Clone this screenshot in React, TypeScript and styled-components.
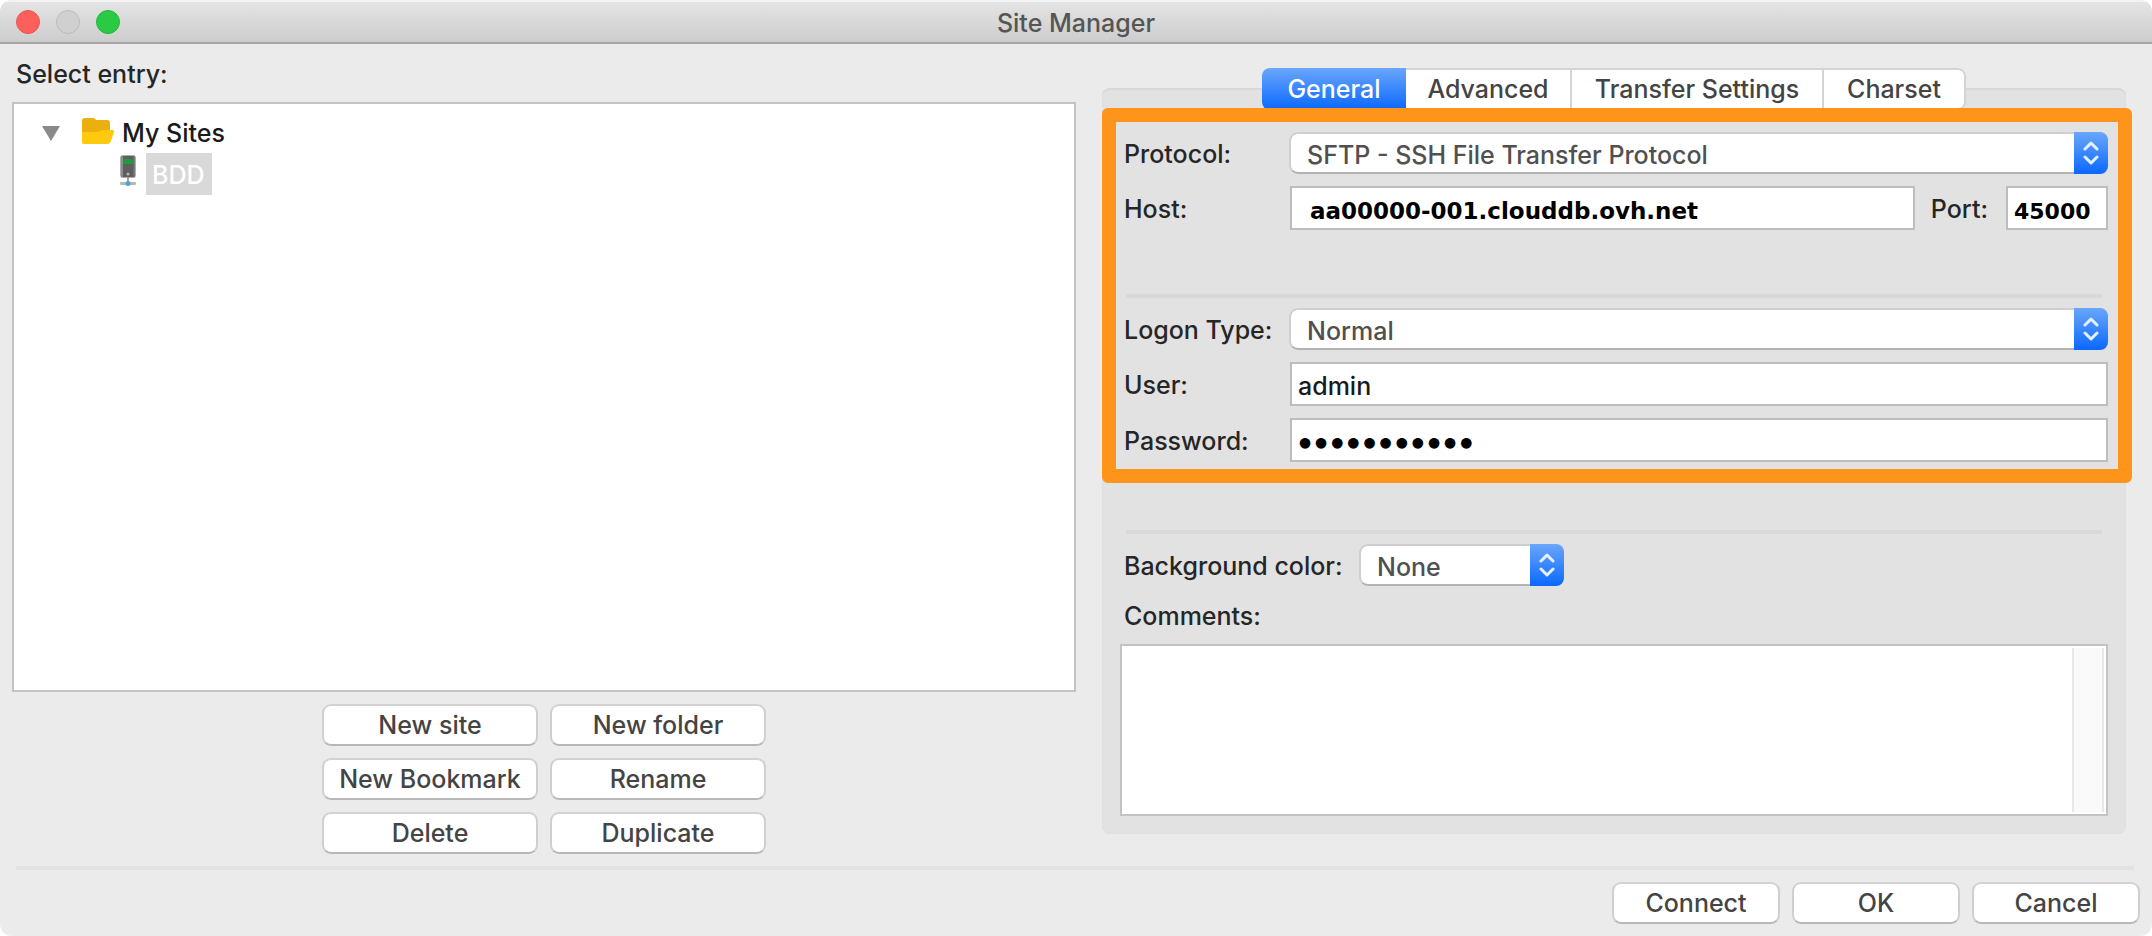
import React from "react";
import styled, { createGlobalStyle, css } from "styled-components";

const GlobalStyle = createGlobalStyle`
  * { box-sizing: border-box; }
  body {
    margin: 0;
    background: #fff;
    color: #262626;
    font-family: Inter, "Liberation Sans", sans-serif;
    font-size: 25px;
    font-weight: 500;
    line-height: 32px;
  }
  button, input, select, textarea { font: inherit; color: inherit; margin: 0; }
`;

const Window = styled.main`
  display: flex;
  flex-direction: column;
  min-height: 100vh;
  background: #ebebeb;
  border-radius: 12px;
  overflow: hidden;
`;

const TitleBar = styled.header`
  display: grid;
  grid-template-columns: 1fr auto 1fr;
  align-items: center;
  height: 44px;
  padding: 2px 16px 0;
  border-bottom: 2px solid #a6a6a6;
  background: linear-gradient(#e5e5e5, #cdcdcd);
  box-shadow: inset 0 2px 0 #f3f3f3;
`;

const Title = styled.h1`
  margin: 0;
  padding-top: 2px;
  font-size: 25px;
  font-weight: 500;
  color: #555;
`;

const Lights = styled.div`
  display: flex;
  gap: 16px;
`;

const Light = styled.button<{ $fill: string; $edge: string }>`
  width: 24px;
  height: 24px;
  padding: 0;
  border: 1px solid ${(p) => p.$edge};
  border-radius: 50%;
  background: ${(p) => p.$fill};
`;

const Content = styled.div`
  flex: 1;
  display: grid;
  grid-template-columns: 1064fr 1024fr;
  gap: 26px;
  padding: 14px 26px 12px 12px;
`;

const LeftPane = styled.section`
  display: flex;
  flex-direction: column;
`;

const PaneLabel = styled.h2`
  margin: 0;
  padding: 0 0 12px 4px;
  font-size: 25px;
  font-weight: 500;
`;

const Tree = styled.ul`
  flex: 1;
  margin: 0 0 12px;
  padding: 10px 28px;
  border: 2px solid #c3c3c3;
  background: #fff;
  list-style: none;
  color: #1a1a1a;
`;

const TreeChildren = styled.ul`
  margin: 0;
  padding: 0 0 0 78px;
  list-style: none;
`;

const TreeRow = styled.div`
  display: flex;
  align-items: center;
  height: 40px;
`;

const Disclosure = styled.button`
  display: flex;
  width: 40px;
  padding: 0;
  border: 0;
  background: none;
`;

const TreeName = styled.span<{ $selected?: boolean }>`
  padding: 4px 6px 6px;
  ${(p) =>
    p.$selected &&
    css`
      padding: 6px 7px 4px 6px;
      background: #d9d9d9;
      color: #fff;
    `}
`;

const IconSlot = styled.span<{ $width: number }>`
  display: flex;
  width: ${(p) => p.$width}px;
  padding-bottom: 6px;
`;

const PushButton = styled.button`
  height: 42px;
  padding: 0;
  border: 2px solid;
  border-color: #d2d2d2 #cfcfcf #b8b8b8;
  border-radius: 9px;
  background: #fff;
  color: #444;
`;

const EntryActions = styled.div`
  display: grid;
  grid-template-columns: 216px 216px;
  gap: 12px;
  justify-content: center;
`;

const RightPane = styled.section`
  display: flex;
  flex-direction: column;
  margin: 30px 0 20px;
  padding-bottom: 18px;
  border-radius: 8px;
  background: #e2e2e2;
  box-shadow: inset 0 2px 0 #d9d9d9, inset 0 0 0 1px #dfdfdf;
`;

const Tabs = styled.div`
  align-self: center;
  display: flex;
  height: 42px;
  margin-top: -20px;
  border-radius: 8px;
  overflow: hidden;
`;

const Tab = styled.button<{ $width: number; $active?: boolean }>`
  width: ${(p) => p.$width}px;
  padding: 0;
  border: solid #d4d4d4;
  border-width: 2px 2px 2px 0;
  background: #fff;
  color: #444;
  &:last-child { border-radius: 0 8px 8px 0; }
  ${(p) =>
    p.$active &&
    css`
      border: 0;
      background: linear-gradient(#6aa6fb, #0a68ff);
      color: #fff;
    `}
`;

const Highlight = styled.div`
  position: relative;
  display: flex;
  flex-direction: column;
  gap: 12px;
  margin: -2px -6px 0 0;
  padding: 10px 10px 7px 8px;
  border: 14px solid #ff941a;
  border-radius: 6px;
`;

const Field = styled.div`
  display: grid;
  grid-template-columns: 166px 1fr;
  align-items: center;
`;

const HostField = styled(Field)`
  grid-template-columns: 166px 1fr auto 102px;
`;

const Label = styled.label`
  padding-top: 2px;
`;

const PortLabel = styled(Label)`
  padding-left: 16px;
  padding-right: 18px;
`;

const TextInput = styled.input<{ $typed?: number; $inset?: number; $masked?: boolean }>`
  width: 100%;
  min-width: 0;
  height: 44px;
  padding: 4px 6px 0 ${(p) => p.$inset ?? 6}px;
  border: 2px solid #bdbdbd;
  border-radius: 0;
  background: #fff;
  color: #1a1a1a;
  ${(p) =>
    p.$typed &&
    css`
      padding-top: 6px;
      color: #000;
      font-family: "DejaVu Sans", sans-serif;
      font-size: ${p.$typed}px;
      font-weight: 700;
    `}
  ${(p) =>
    p.$masked &&
    css`
      padding: 0 5px;
      color: #000;
      font-size: 34px;
      font-weight: 700;
    `}
`;

const Rule = styled.hr<{ $color?: string }>`
  height: 4px;
  margin: 0;
  border: 0;
  background: ${(p) => p.$color ?? "#d9d9d9"};
`;

const LogonRule = styled(Rule)`
  margin: 52px 6px -2px 2px;
`;

const Picker = styled.div`
  display: grid;
  grid-template-columns: 1fr 34px;
  height: 42px;
  margin-left: -1px;
`;

const PickerSelect = styled.select`
  grid-area: 1 / 1 / 2 / 3;
  appearance: none;
  width: 100%;
  padding: 4px 48px 0 16px;
  border: 2px solid;
  border-color: #cfcfcf #cfcfcf #b4b4b4;
  border-radius: 9px;
  background: #fff;
  color: #505050;
`;

const Stepper = styled.span`
  grid-area: 1 / 2;
  display: flex;
  align-items: center;
  justify-content: center;
  z-index: 1;
  border-radius: 0 8px 8px 0;
  background: linear-gradient(#6aa6fb, #0a68ff);
  pointer-events: none;
`;

const Extras = styled.div`
  flex: 1;
  display: flex;
  flex-direction: column;
  padding: 47px 18px 0;
`;

const ExtrasRule = styled(Rule)`
  margin: 0 6px 10px;
`;

const ColorField = styled.div`
  display: grid;
  grid-template-columns: 236px 204px;
  align-items: center;
  padding-left: 4px;
  margin-bottom: 14px;
`;

const CommentsLabel = styled(Label)`
  padding: 0 0 12px 4px;
`;

const CommentsBox = styled.div`
  flex: 1;
  display: flex;
  min-height: 172px;
  padding: 2px;
  border: 2px solid #c3c3c3;
  background: #fff;
`;

const CommentsInput = styled.textarea`
  flex: 1;
  border: 0;
  padding: 4px;
  resize: none;
  background: none;
`;

const ScrollTrack = styled.div`
  width: 32px;
  border: solid #e8e8e8;
  border-width: 0 2px;
  background: #fafafa;
`;

const Footer = styled.footer`
  padding: 0 12px 12px;
`;

const FooterRule = styled(Rule)`
  margin: 0 6px 12px 4px;
`;

const FooterActions = styled.div`
  display: grid;
  grid-template-columns: repeat(3, 168px);
  gap: 12px;
  justify-content: end;
`;

const TriangleIcon = () => (
  <svg width="18" height="16" viewBox="0 0 18 16" aria-hidden="true">
    <path d="M0 0H18L9 15Z" fill="#8a8a8a" />
  </svg>
);

const FolderIcon = () => (
  <svg width="32" height="26" viewBox="0 0 32 26" aria-hidden="true">
    <path d="M0 3Q0 0 3 0H11Q13 0 14 2H25Q28 2 28 5V20H0Z" fill="#eab010" />
    <path
      d="M0 25V14H15Q17 14 18 13Q19 12 21 12H31Q32 12 32 14L29 23Q28 26 26 26H2Q0 26 0 25Z"
      fill="#ffc90e"
    />
  </svg>
);

const ServerIcon = () => (
  <svg width="16" height="32" viewBox="0 0 16 32" aria-hidden="true">
    <rect x="0.5" y="0.5" width="15" height="22" rx="1.5" fill="#5e5e5e" />
    <rect x="1" y="1" width="2" height="21" fill="#8c8c8c" />
    <rect x="13.5" y="1" width="1.5" height="21" fill="#7c7c7c" />
    <rect x="3" y="4" width="10" height="5" rx="1" fill="#1f9a3c" />
    <circle cx="8" cy="19" r="1.5" fill="#b5b5b5" />
    <rect x="7" y="22" width="2" height="6" fill="#a0a0a0" />
    <rect x="0" y="27" width="16" height="3" rx="1" fill="#b4b9bc" />
    <circle cx="8" cy="28.5" r="2.5" fill="#4ba3dc" />
  </svg>
);

const ArrowsIcon = () => (
  <svg width="16" height="24" viewBox="0 0 16 24" aria-hidden="true">
    <path
      d="M2 8L8 2L14 8M2 16L8 22L14 16"
      fill="none"
      stroke="#e6f0ff"
      strokeWidth="3"
      strokeLinecap="round"
      strokeLinejoin="round"
    />
  </svg>
);

function PopUp({ id, value }: { id: string; value: string }) {
  return (
    <Picker>
      <PickerSelect id={id} defaultValue={value}>
        <option>{value}</option>
      </PickerSelect>
      <Stepper>
        <ArrowsIcon />
      </Stepper>
    </Picker>
  );
}

const entryActions = ["New site", "New folder", "New Bookmark", "Rename", "Delete", "Duplicate"];
const tabs = [
  { name: "General", width: 144 },
  { name: "Advanced", width: 166 },
  { name: "Transfer Settings", width: 252 },
  { name: "Charset", width: 142 },
];

export default function App() {
  return (
    <>
      <GlobalStyle />
      <Window>
        <TitleBar>
          <Lights>
            <Light $fill="#fc605b" $edge="#ee5550" aria-label="Close" />
            <Light $fill="#d0d0d0" $edge="#bbbbbb" aria-label="Minimize" />
            <Light $fill="#2aca44" $edge="#24b73b" aria-label="Zoom" />
          </Lights>
          <Title>Site Manager</Title>
        </TitleBar>

        <Content>
          <LeftPane>
            <PaneLabel>Select entry:</PaneLabel>
            <Tree>
              <li>
                <TreeRow>
                  <Disclosure aria-label="Collapse My Sites">
                    <TriangleIcon />
                  </Disclosure>
                  <IconSlot $width={34}>
                    <FolderIcon />
                  </IconSlot>
                  <TreeName>My Sites</TreeName>
                </TreeRow>
                <TreeChildren>
                  <li>
                    <TreeRow>
                      <IconSlot $width={26}>
                        <ServerIcon />
                      </IconSlot>
                      <TreeName $selected>BDD</TreeName>
                    </TreeRow>
                  </li>
                </TreeChildren>
              </li>
            </Tree>
            <EntryActions>
              {entryActions.map((name) => (
                <PushButton key={name}>{name}</PushButton>
              ))}
            </EntryActions>
          </LeftPane>

          <RightPane>
            <Tabs role="tablist">
              {tabs.map((tab, i) => (
                <Tab key={tab.name} role="tab" aria-selected={i === 0} $width={tab.width} $active={i === 0}>
                  {tab.name}
                </Tab>
              ))}
            </Tabs>
            <Highlight>
              <Field>
                <Label htmlFor="protocol">Protocol:</Label>
                <PopUp id="protocol" value="SFTP - SSH File Transfer Protocol" />
              </Field>
              <HostField>
                <Label htmlFor="host">Host:</Label>
                <TextInput id="host" $typed={23} $inset={18} defaultValue="aa00000-001.clouddb.ovh.net" />
                <PortLabel htmlFor="port">Port:</PortLabel>
                <TextInput id="port" $typed={22} defaultValue="45000" />
              </HostField>
              <LogonRule />
              <Field>
                <Label htmlFor="logon">Logon Type:</Label>
                <PopUp id="logon" value="Normal" />
              </Field>
              <Field>
                <Label htmlFor="user">User:</Label>
                <TextInput id="user" defaultValue="admin" />
              </Field>
              <Field>
                <Label htmlFor="password">Password:</Label>
                <TextInput id="password" type="password" $masked defaultValue="adminsecret" />
              </Field>
            </Highlight>
            <Extras>
              <ExtrasRule />
              <ColorField>
                <Label htmlFor="color">Background color:</Label>
                <PopUp id="color" value="None" />
              </ColorField>
              <CommentsLabel htmlFor="comments">Comments:</CommentsLabel>
              <CommentsBox>
                <CommentsInput id="comments" />
                <ScrollTrack />
              </CommentsBox>
            </Extras>
          </RightPane>
        </Content>

        <Footer>
          <FooterRule $color="#e2e2e2" />
          <FooterActions>
            <PushButton>Connect</PushButton>
            <PushButton>OK</PushButton>
            <PushButton>Cancel</PushButton>
          </FooterActions>
        </Footer>
      </Window>
    </>
  );
}
